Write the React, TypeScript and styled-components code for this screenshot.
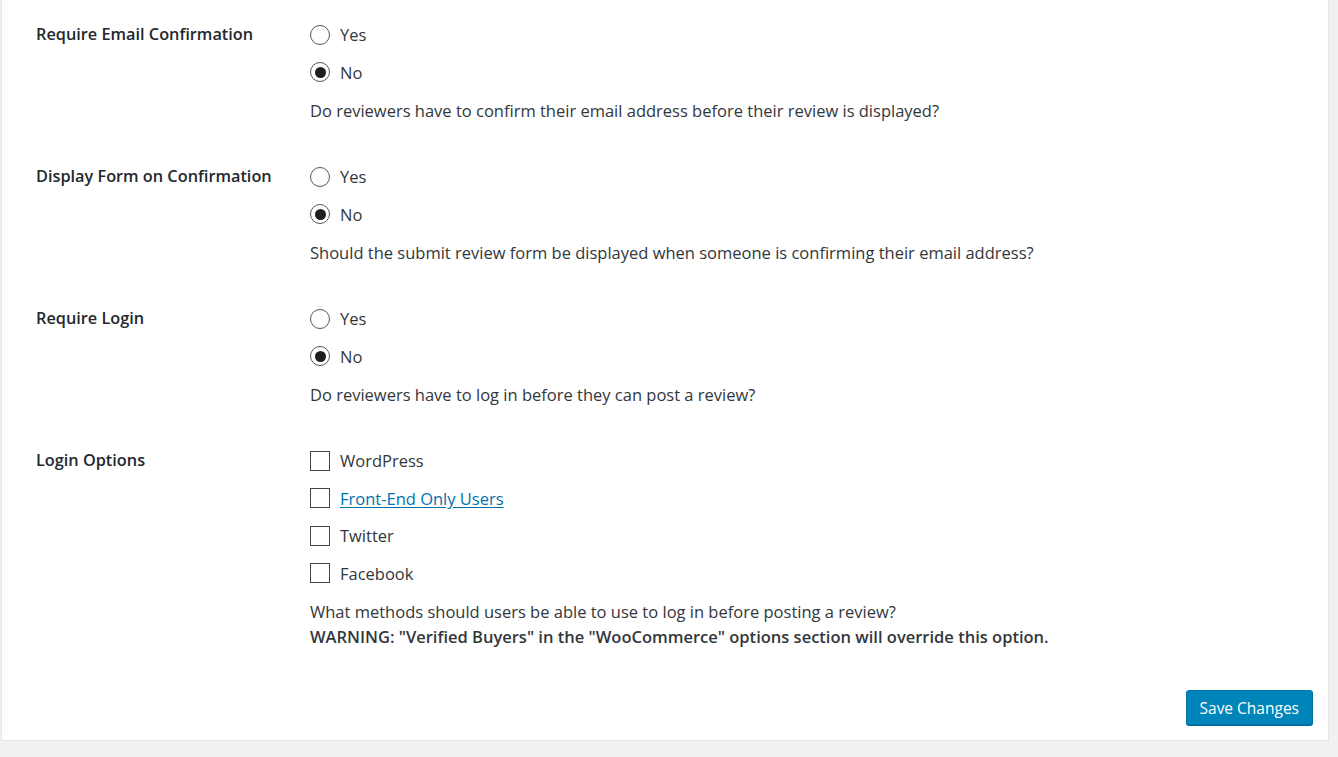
import React from 'react'
import styled, { createGlobalStyle } from 'styled-components'

const GlobalStyle = createGlobalStyle`
  html, body {
    margin: 0;
    padding: 0;
    background: #f1f1f1;
  }
  body {
    font-family: 'Open Sans', 'Noto Sans', sans-serif;
    color: #23282d;
  }
`

const Panel = styled.div`
  margin: 0 9px 0 1px;
  background: #fff;
  border: 1px solid #e5e5e5;
  border-top: none;
  padding: 16px 15px 15px 34px;
`

const FormTable = styled.div`
  display: flex;
  flex-direction: column;
  gap: 35px;
`

const Row = styled.div`
  display: grid;
  grid-template-columns: 274px 1fr;
`

const Label = styled.div`
  font-size: 16.3px;
  font-weight: 600;
  line-height: 37.5px;
  color: #23282d;
`

const Field = styled.div`
  display: flex;
  flex-direction: column;
`

const Option = styled.label`
  display: flex;
  align-items: center;
  gap: 10px;
  height: 37.5px;
  font-size: 16.5px;
  color: #32373c;
`

const Radio = styled.input.attrs({ type: 'radio' })`
  appearance: none;
  margin: 0;
  width: 20px;
  height: 20px;
  border: 1px solid #555;
  border-radius: 50%;
  background: #fff;
  display: grid;
  place-content: center;
  box-sizing: border-box;

  &:checked::before {
    content: '';
    width: 11px;
    height: 11px;
    border-radius: 50%;
    background: #1e1e1e;
  }
`

const Checkbox = styled.input.attrs({ type: 'checkbox' })`
  appearance: none;
  margin: 0;
  width: 20px;
  height: 20px;
  border: 1px solid #444;
  background: #fff;
  box-sizing: border-box;
`

const OptionLink = styled.a`
  color: #0073aa;
  text-decoration: underline;
  text-underline-offset: 2px;
`

const Description = styled.p`
  margin: 7px 0 0;
  font-size: 16.5px;
  line-height: 25px;
  color: #32373c;

  strong {
    display: block;
    font-weight: 600;
    color: #32373c;
  }
`

const Footer = styled.div`
  display: flex;
  justify-content: flex-end;
  margin-top: 41px;
`

const SaveButton = styled.button`
  height: 35px;
  padding: 0 13px;
  font-family: inherit;
  font-size: 15.5px;
  color: #fff;
  background: #0085ba;
  border: 1px solid #0073aa;
  border-radius: 3px;
  box-shadow: 0 1px 0 #006799;
  cursor: pointer;
`

type YesNoProps = {
  name: string
  label: string
  description: string
}

function YesNoRow({ name, label, description }: YesNoProps) {
  return (
    <Row>
      <Label>{label}</Label>
      <Field>
        <Option>
          <Radio name={name} value="yes" />
          Yes
        </Option>
        <Option>
          <Radio name={name} value="no" defaultChecked />
          No
        </Option>
        <Description>{description}</Description>
      </Field>
    </Row>
  )
}

export default function App() {
  return (
    <>
      <GlobalStyle />
      <Panel>
        <FormTable>
          <YesNoRow
            name="require-email"
            label="Require Email Confirmation"
            description="Do reviewers have to confirm their email address before their review is displayed?"
          />
          <YesNoRow
            name="display-form"
            label="Display Form on Confirmation"
            description="Should the submit review form be displayed when someone is confirming their email address?"
          />
          <YesNoRow
            name="require-login"
            label="Require Login"
            description="Do reviewers have to log in before they can post a review?"
          />
          <Row>
            <Label>Login Options</Label>
            <Field>
              <Option>
                <Checkbox />
                WordPress
              </Option>
              <Option>
                <Checkbox />
                <OptionLink href="#">Front-End Only Users</OptionLink>
              </Option>
              <Option>
                <Checkbox />
                Twitter
              </Option>
              <Option>
                <Checkbox />
                Facebook
              </Option>
              <Description>
                What methods should users be able to use to log in before posting a review?
                <strong>
                  WARNING: "Verified Buyers" in the "WooCommerce" options section will override this option.
                </strong>
              </Description>
            </Field>
          </Row>
        </FormTable>
        <Footer>
          <SaveButton>Save Changes</SaveButton>
        </Footer>
      </Panel>
    </>
  )
}
